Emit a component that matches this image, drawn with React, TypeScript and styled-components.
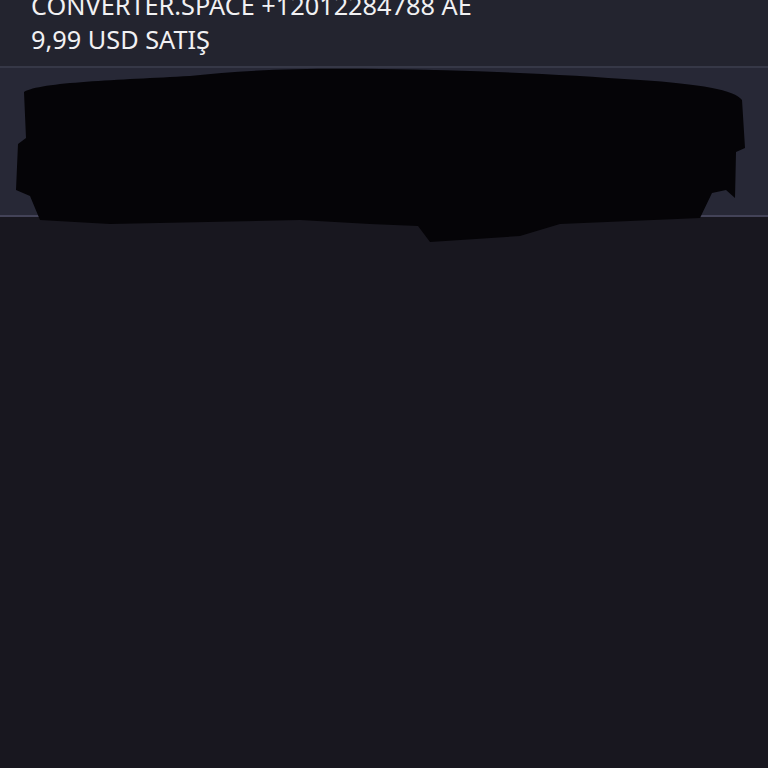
import React, { FC } from 'react'
import styled, { createGlobalStyle } from 'styled-components'

const GlobalStyle = createGlobalStyle`
  html, body {
    margin: 0;
    padding: 0;
    background: #18171f;
    height: 100%;
    overflow: hidden;
  }
  #root {
    min-height: 100vh;
  }
`

const Page = styled.div`
  display: flex;
  flex-direction: column;
  min-height: 768px;
  background: #18171f;
  font-family: 'Noto Sans', 'Open Sans', sans-serif;
`

const Header = styled.header`
  display: flex;
  flex-direction: column;
  background: #23242f;
  border-bottom: 2px solid #363847;
  padding: 0 31px;
  height: 68px;
  box-sizing: border-box;
  overflow: hidden;
`

const Lines = styled.div`
  margin-top: -12px;
  color: #f1f1f3;
  font-size: 25.3px;
  line-height: 34px;
`

const Panel = styled.section`
  position: relative;
  height: 149px;
  box-sizing: border-box;
  background: #272836;
  border-bottom: 2px solid #434358;
`

// black marker scribble that hides the panel content
const Redaction = styled.svg`
  position: absolute;
  left: 0;
  top: 0;
  width: 768px;
  height: 200px;
  pointer-events: none;
`

const Scribble: FC = () => (
  <Redaction viewBox="0 0 768 200">
    <path
      fill="#050407"
      d="M24 24 C 40 14, 120 12, 190 8 C 240 2, 300 0, 380 1 C 470 2, 560 6, 640 12 C 700 16, 735 22, 742 32 L 745 80 L 736 84 L 735 130 L 726 122 L 712 125 L 700 150 L 560 156 L 520 168 L 430 174 L 418 158 L 370 156 L 300 152 L 110 156 L 40 152 L 30 128 L 16 122 L 18 76 L 26 70 Z"
    />
  </Redaction>
)

const Body = styled.main`
  flex: 1;
  background: #18171f;
`

export default function App() {
  return (
    <>
      <GlobalStyle />
      <Page>
        <Header>
          <Lines>
            <div>CONVERTER.SPACE +12012284788 AE</div>
            <div>9,99 USD SATIŞ</div>
          </Lines>
        </Header>
        <Panel>
          <Scribble />
        </Panel>
        <Body />
      </Page>
    </>
  )
}
